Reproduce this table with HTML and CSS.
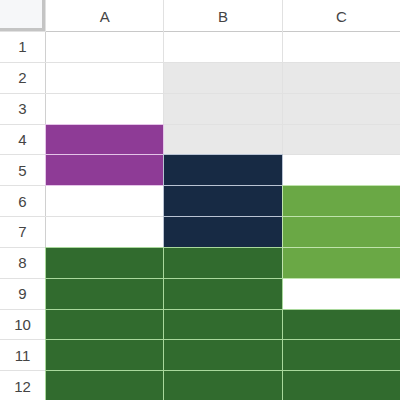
FILE: index.html
```html
<!DOCTYPE html>
<html>
<head>
<meta charset="utf-8">
<link rel="stylesheet" href="styles.css">
</head>
<body>
<div class="sheet">
  <div class="corner"></div>
  <div class="colh">A</div><div class="colh">B</div><div class="colh">C</div>

  <div class="rowh">1</div><div class="c"></div><div class="c"></div><div class="c"></div>
  <div class="rowh">2</div><div class="c"></div><div class="c grey"></div><div class="c grey"></div>
  <div class="rowh">3</div><div class="c"></div><div class="c grey"></div><div class="c grey"></div>
  <div class="rowh">4</div><div class="c purple"></div><div class="c grey"></div><div class="c grey"></div>
  <div class="rowh">5</div><div class="c purple"></div><div class="c navy"></div><div class="c"></div>
  <div class="rowh">6</div><div class="c"></div><div class="c navy"></div><div class="c lgreen"></div>
  <div class="rowh">7</div><div class="c"></div><div class="c navy"></div><div class="c lgreen"></div>
  <div class="rowh">8</div><div class="c dgreen"></div><div class="c dgreen"></div><div class="c lgreen"></div>
  <div class="rowh">9</div><div class="c dgreen"></div><div class="c dgreen"></div><div class="c"></div>
  <div class="rowh">10</div><div class="c dgreen"></div><div class="c dgreen"></div><div class="c dgreen"></div>
  <div class="rowh">11</div><div class="c dgreen"></div><div class="c dgreen"></div><div class="c dgreen"></div>
  <div class="rowh">12</div><div class="c dgreen"></div><div class="c dgreen"></div><div class="c dgreen"></div>
</div>
</body>
</html>
```
FILE: styles.css
```css
html, body {
  margin: 0;
  padding: 0;
  background: #ffffff;
}
.sheet {
  width: 400px;
  height: 401px;
  display: grid;
  grid-template-columns: 45px repeat(3, 1fr);
  grid-template-rows: 31px repeat(12, 1fr);
  gap: 1px;
  background: #e1e1e1;
  font-family: "Liberation Sans", Arial, sans-serif;
  font-size: 15px;
  color: #444444;
  overflow: hidden;
}
.corner {
  background: #f6f7f9;
  border-right: 3px solid #c4c4c4;
  border-bottom: 3px solid #c4c4c4;
}
.colh, .rowh {
  background: #ffffff;
  display: flex;
  align-items: center;
  justify-content: center;
}
.colh {
  box-shadow: 0 1px 0 #c8c8c8;
  padding-top: 1px;
}
.rowh {
  box-shadow: 1px 0 0 #d0d0d0;
}
.c {
  background: #ffffff;
}
.grey {
  background: #e8e8e8;
}
.purple {
  background: #8e3b96;
  box-shadow: 0 0 0 1px #e4c4e8;
}
.navy {
  background: #172a44;
  box-shadow: 0 0 0 1px #b9c3d3;
}
.lgreen {
  background: #6aa845;
  box-shadow: 0 0 0 1px #bfe3ac;
}
.dgreen {
  background: #316b2e;
  box-shadow: 0 0 0 1px #a9d89c;
}
```
